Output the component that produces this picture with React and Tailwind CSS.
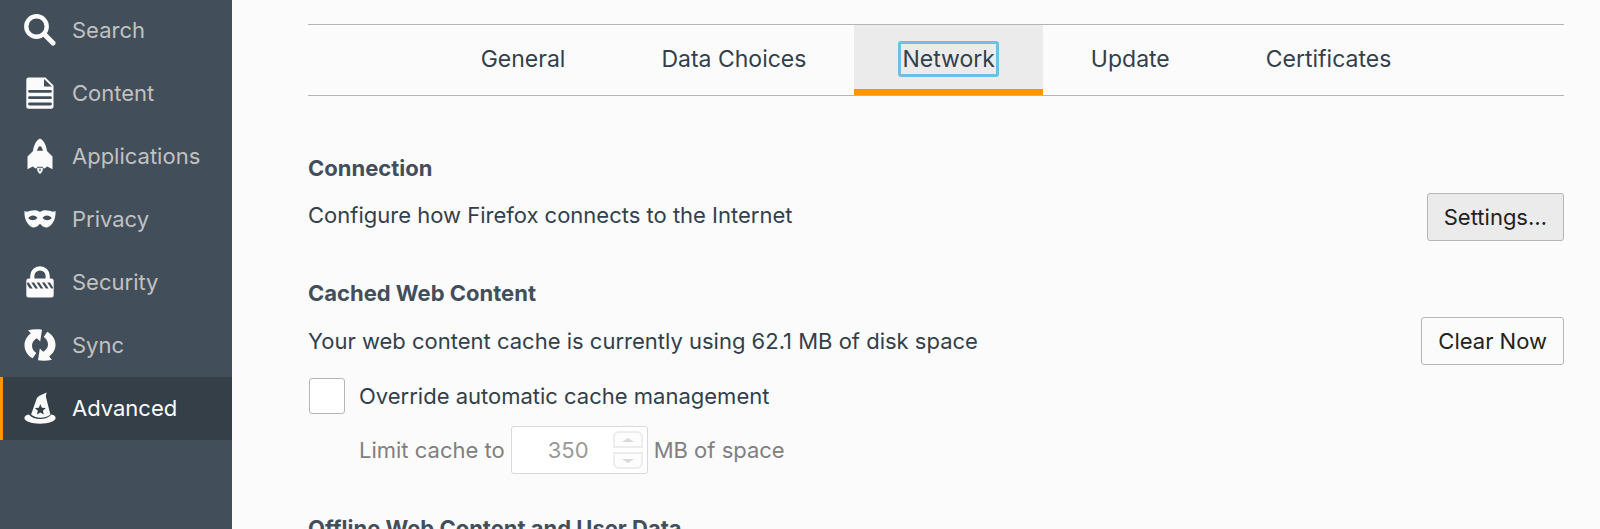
import { useState } from 'react';
import clsx from 'clsx';

const SearchIcon = () => (
  <svg viewBox="0 0 32 32" className="size-8 shrink-0" aria-hidden="true">
    <circle cx="12.5" cy="12.5" r="10.2" fill="none" stroke="#fbfbfb" strokeWidth="4.4" />
    <path d="M20.5 20.5 29 29" stroke="#fbfbfb" strokeWidth="5" strokeLinecap="round" />
  </svg>
);

const ContentIcon = () => (
  <svg viewBox="0 0 32 32" className="size-8 shrink-0" aria-hidden="true">
    <path fill="#fbfbfb" d="M4.800 .5h16.700l8 8v20.700a2.500 2.500 0 0 1-2.500 2.500H4.800a2.500 2.500 0 0 1-2.500-2.500V3A2.500 2.500 0 0 1 4.800 .5z" />
    <path fill="#424f5a" d="M20 2v7.500h8z" />
    <path stroke="#424f5a" strokeWidth="2.800" strokeLinecap="round" d="M5.500 14.300h21M5.500 20.700h21M5.500 27h21" />
  </svg>
);

const ApplicationsIcon = () => (
  <svg viewBox="0 0 32 32" className="size-8 shrink-0 overflow-visible" aria-hidden="true">
    <path fill="#fbfbfb" fillRule="evenodd" d="M16-1.500c3.500 1.500 6.200 6.500 7 12.500l5.500 5.500v12.800l-5.200-2.800-3.300 2.200-1.500-2h-5l-1.500 2-3.300-2.200-5.200 2.800V16.500L9 11c.8-6 3.500-11 7-12.500zM16 6c-1.500.8-2.500 2.600-2.900 4.700h5.800C18.500 8.600 17.500 6.800 16 6z" />
    <path fill="#fbfbfb" fillRule="evenodd" d="M13.300 27.800h5.400c.7 2.500-.7 5-2.700 6.200-2-1.200-3.400-3.700-2.700-6.200zm2.700.2c-.9 1.300-1 2.400 0 3.800 1-1.400.9-2.500 0-3.800z" />
  </svg>
);

const PrivacyIcon = () => (
  <svg viewBox="0 0 32 32" className="size-8 shrink-0" aria-hidden="true">
    <path fill="#fbfbfb" fillRule="evenodd" d="M.5 8c2.600 1.200 4 .5 6.200-.2 3.300-1 6.700-.8 9.300 1.200 2.600-2 6-2.200 9.300-1.200 2.200.7 3.600 1.400 6.200.2.300 4.200-.5 8.500-2.700 11.800-2 3-4.300 4.700-6.800 4.700-2.700 0-4.300-2.300-6-3.700-1.700 1.400-3.300 3.700-6 3.700-2.500 0-4.800-1.700-6.800-4.700C1 16.500.2 12.200.5 8zm3.700 7.200c2.800 2.600 6.300 2.700 9.300-.2-2.300-3.300-7-3.300-9.300.2zm14.300-.2c3 2.900 6.500 2.800 9.300.2-2.300-3.500-7-3.500-9.300-.2z" />
  </svg>
);

const SecurityIcon = () => (
  <svg viewBox="0 0 32 32" className="size-8 shrink-0" aria-hidden="true">
    <path fill="none" stroke="#fbfbfb" strokeWidth="4.200" d="M8.300 14V10a7.700 7.700 0 0 1 15.400 0v4" />
    <rect x="2.300" y="12.500" width="27.400" height="19" rx="2.500" fill="#fbfbfb" />
    <path fill="#424f5a" d="M3.200 16.500h1.500l4 6H5.700l-2.500-3.700zM7.300 16.500h2.700l4 6h-2.700zM12.600 16.500h2.700l4 6h-2.700zM17.900 16.500h2.700l4 6h-2.700zM23.200 16.500h2.700l2.900 4.400v1.600h-1.600z" />
  </svg>
);

const SyncIcon = () => (
  <svg viewBox="0 0 32 32" className="size-8 shrink-0" aria-hidden="true">
    <path fill="#fbfbfb" d="M4 1.300C8 .3 13 0 18 .7L16.200 12.500l-3.400-3.300C9.700 11 8 13.500 8 16.500c0 3.200 1.500 5.700 4.300 7.500L8.700 29.300C3.500 26.500.5 21.700.5 16.200c0-4.700 2.300-8.900 6.300-11.700C6 3.300 5 2.300 4 1.300z" />
    <path fill="#fbfbfb" d="M28 30.700c-4 1-9 1.300-14 .6l1.800-11.800 3.400 3.300c3.100-1.800 4.800-4.300 4.800-7.300 0-3.200-1.500-5.700-4.300-7.500l3.600-5.300c5.200 2.800 8.200 7.600 8.200 13.100 0 4.700-2.300 8.900-6.300 11.700.8 1.200 1.800 2.200 2.800 3.200z" />
  </svg>
);

const AdvancedIcon = () => (
  <svg viewBox="0 0 32 32" className="size-8 shrink-0" aria-hidden="true">
    <path fill="#fbfbfb" d="M22.800.5c-1 2.300-1.200 4.200-.4 6.200l4 15.800c-5.500 4.300-14 4.300-19.300 0l5.200-14.800C13.200 3.500 18 2.800 22.800.5z" />
    <path fill="#fbfbfb" d="M4.800 22.500c5 6 17.600 6 22.600 0 2.600.6 4.200 1.900 4.200 3.500 0 3.200-7 5.700-15.600 5.700S.4 29.200.4 26c0-1.600 1.700-2.900 4.400-3.500z" />
    <path fill="#343f48" d="m16.300 12.200 1.600 3.500 3.900.4-2.900 2.600.9 3.900-3.500-2-3.400 2 .9-3.900-2.900-2.600 3.900-.4z" />
  </svg>
);

const categories = [
  { name: 'Search', icon: SearchIcon },
  { name: 'Content', icon: ContentIcon },
  { name: 'Applications', icon: ApplicationsIcon },
  { name: 'Privacy', icon: PrivacyIcon },
  { name: 'Security', icon: SecurityIcon },
  { name: 'Sync', icon: SyncIcon },
  { name: 'Advanced', icon: AdvancedIcon },
];

const tabs = ['General', 'Data Choices', 'Network', 'Update', 'Certificates'];

const buttonClass = 'h-12 shrink-0 rounded-[3px] border border-[#b5b5b5] px-4 text-[#222222]';

export default function App() {
  const [category, setCategory] = useState('Advanced');
  const [tab, setTab] = useState('Network');
  const [override, setOverride] = useState(false);
  const [limit, setLimit] = useState(350);

  return (
    <div className="flex h-screen overflow-hidden bg-[#fbfbfb] font-['Inter',sans-serif] text-[22px] leading-7 text-[#333f4b]">
      <nav className="w-58 shrink-0 bg-[#424f5a]">
        <ul className="-mt-px">
          {categories.map(({ name, icon: Icon }) => (
            <li key={name}>
              <a
                href={`#${name.toLowerCase()}`}
                onClick={() => setCategory(name)}
                className={clsx(
                  'flex h-[63px] items-center gap-4 border-l-3 pb-0.5 pl-[21px]',
                  category === name ? 'border-[#ff9500] bg-[#343f48] text-[#fbfbfb]' : 'border-transparent text-[#c1c1c1]'
                )}
              >
                <Icon />
                {name}
              </a>
            </li>
          ))}
        </ul>
      </nav>

      <main className="min-w-0 flex-1 overflow-hidden pt-6 pr-9 pl-19">
        <div role="tablist" className="flex h-18 justify-center border-y border-[#b5b5b5]">
          {tabs.map((t) => (
            <button
              key={t}
              type="button"
              role="tab"
              aria-selected={tab === t}
              onClick={() => setTab(t)}
              className={clsx('border-b-6 px-11 pt-1 text-[23px]', tab === t ? 'border-[#ff9500] bg-[#ebebeb]' : 'border-transparent')}
            >
              <span className={clsx('block rounded-[3px] border-3 px-px py-px', tab === t ? 'border-[#6fbfe4]' : 'border-transparent')}>{t}</span>
            </button>
          ))}
        </div>

        <section className="mt-[58px]">
          <h2 className="font-bold text-[#424f5a]">Connection</h2>
          <div className="mt-[11px] flex items-start justify-between">
            <p className="pt-2">Configure how Firefox connects to the Internet</p>
            <button type="button" className={clsx(buttonClass, 'bg-[#ebebeb]')}>Settings…</button>
          </div>
        </section>

        <section className="mt-[38px]">
          <h2 className="font-bold text-[#424f5a]">Cached Web Content</h2>
          <div className="mt-[10px] flex items-center justify-between">
            <p>Your web content cache is currently using 62.1 MB of disk space</p>
            <button type="button" className={clsx(buttonClass, 'bg-[#fbfbfb]')}>Clear Now</button>
          </div>
          <label className="mt-[13px] ml-px flex w-fit items-center gap-[14px]">
            <input
              type="checkbox"
              checked={override}
              onChange={(e) => setOverride(e.target.checked)}
              className="size-9 appearance-none rounded-[3px] border border-[#b5b5b5] bg-white checked:bg-[#6fbfe4]"
            />
            Override automatic cache management
          </label>
          <div className="mt-3 ml-[51px] flex items-center gap-[6px] text-[#808080]">
            <label htmlFor="cacheSize">Limit cache to</label>
            <div className="flex h-12 w-[137px] items-center rounded-[3px] border border-[#d9d9d9] bg-white pr-1">
              <input
                id="cacheSize"
                type="number"
                value={limit}
                disabled={!override}
                onChange={(e) => setLimit(Number(e.target.value))}
                className="w-0 flex-1 pl-3 text-center text-[#999999] [appearance:textfield] [&::-webkit-inner-spin-button]:appearance-none"
              />
              <div className="flex w-[30px] flex-col gap-1">
                <button type="button" aria-label="Increase" disabled={!override} onClick={() => setLimit(limit + 1)}
                  className="flex h-[17px] items-center justify-center rounded-t-md border-2 border-[#ededed] bg-[#fdfdfd]">
                  <svg viewBox="0 0 12 4" className="h-1 w-3"><path d="M0 4 6 0l6 4z" fill="#d9d9d9" /></svg>
                </button>
                <button type="button" aria-label="Decrease" disabled={!override} onClick={() => setLimit(limit - 1)}
                  className="flex h-[17px] items-center justify-center rounded-b-md border-2 border-[#ededed] bg-[#fdfdfd]">
                  <svg viewBox="0 0 12 4" className="h-1 w-3"><path d="M0 0h12L6 4z" fill="#d9d9d9" /></svg>
                </button>
              </div>
            </div>
            <span>MB of space</span>
          </div>
        </section>

        <section className="mt-10">
          <h2 className="font-bold text-[#424f5a]">Offline Web Content and User Data</h2>
        </section>
      </main>
    </div>
  );
}
